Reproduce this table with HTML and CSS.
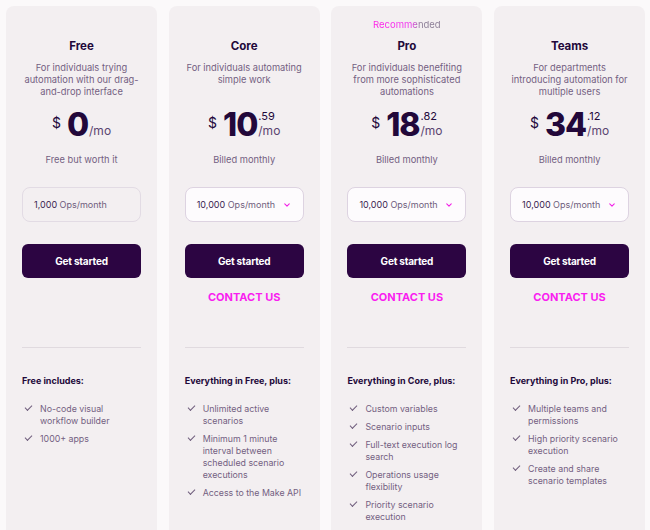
FILE: index.html
```html
<!DOCTYPE html>
<html lang="en">
<head>
<meta charset="utf-8">
<title>Pricing</title>
<link rel="stylesheet" href="styles.css">
</head>
<body>
<div class="plans">
  <section class="card">
    <div class="badge"></div>
    <h2 class="title">Free</h2>
    <p class="desc">For individuals trying automation with our drag-and-drop interface</p>
    <div class="price"><span class="cur">$</span><span class="amt">0</span><span class="side"><span class="cents">&nbsp;</span><span class="per">/mo</span></span></div>
    <p class="billing">Free but worth it</p>
    <div class="ops ops-disabled"><span><b>1,000</b> Ops/month</span></div>
    <button class="cta">Get started</button>
    <a class="contact hidden">CONTACT US</a>
    <hr class="sep">
    <h3 class="inc">Free includes:</h3>
    <ul class="features">
      <li>No-code visual workflow builder</li>
      <li>1000+ apps</li>
    </ul>
  </section>

  <section class="card">
    <div class="badge"></div>
    <h2 class="title">Core</h2>
    <p class="desc">For individuals automating simple work</p>
    <div class="price"><span class="cur">$</span><span class="amt">10</span><span class="side"><span class="cents">.59</span><span class="per">/mo</span></span></div>
    <p class="billing">Billed monthly</p>
    <div class="ops"><span><b>10,000</b> Ops/month</span><svg class="chev" viewBox="0 0 8 5" width="6" height="4"><path d="M1 1l3 3 3-3" fill="none" stroke="currentColor" stroke-width="1.4" stroke-linecap="round" stroke-linejoin="round"/></svg></div>
    <button class="cta">Get started</button>
    <a class="contact">CONTACT US</a>
    <hr class="sep">
    <h3 class="inc">Everything in Free, plus:</h3>
    <ul class="features">
      <li>Unlimited active scenarios</li>
      <li>Minimum 1 minute interval between scheduled scenario executions</li>
      <li>Access to the Make API</li>
    </ul>
  </section>

  <section class="card">
    <div class="badge"><span class="rec">Recommended</span></div>
    <h2 class="title">Pro</h2>
    <p class="desc">For individuals benefiting from more sophisticated automations</p>
    <div class="price"><span class="cur">$</span><span class="amt">18</span><span class="side"><span class="cents">.82</span><span class="per">/mo</span></span></div>
    <p class="billing">Billed monthly</p>
    <div class="ops"><span><b>10,000</b> Ops/month</span><svg class="chev" viewBox="0 0 8 5" width="6" height="4"><path d="M1 1l3 3 3-3" fill="none" stroke="currentColor" stroke-width="1.4" stroke-linecap="round" stroke-linejoin="round"/></svg></div>
    <button class="cta">Get started</button>
    <a class="contact">CONTACT US</a>
    <hr class="sep">
    <h3 class="inc">Everything in Core, plus:</h3>
    <ul class="features">
      <li>Custom variables</li>
      <li>Scenario inputs</li>
      <li>Full-text execution log search</li>
      <li>Operations usage flexibility</li>
      <li>Priority scenario execution</li>
    </ul>
  </section>

  <section class="card">
    <div class="badge"></div>
    <h2 class="title">Teams</h2>
    <p class="desc">For departments introducing automation for multiple users</p>
    <div class="price"><span class="cur">$</span><span class="amt">34</span><span class="side"><span class="cents">.12</span><span class="per">/mo</span></span></div>
    <p class="billing">Billed monthly</p>
    <div class="ops"><span><b>10,000</b> Ops/month</span><svg class="chev" viewBox="0 0 8 5" width="6" height="4"><path d="M1 1l3 3 3-3" fill="none" stroke="currentColor" stroke-width="1.4" stroke-linecap="round" stroke-linejoin="round"/></svg></div>
    <button class="cta">Get started</button>
    <a class="contact">CONTACT US</a>
    <hr class="sep">
    <h3 class="inc">Everything in Pro, plus:</h3>
    <ul class="features">
      <li>Multiple teams and permissions</li>
      <li>High priority scenario execution</li>
      <li>Create and share scenario templates</li>
    </ul>
  </section>
</div>
</body>
</html>
```

FILE: styles.css
```css
* { box-sizing: border-box; }

html, body {
  margin: 0;
  padding: 0;
  background: #fbf9fa;
  font-family: Inter, "Noto Sans", sans-serif;
  color: #6f5d7c;
  height: 530px;
  overflow: hidden;
}

.plans {
  display: grid;
  grid-template-columns: repeat(4, 151px);
  column-gap: 11.7px;
  padding: 6px 6px 0 6px;
}

.card {
  background: #f3eff1;
  border-radius: 8px;
  padding: 13px 16px 0 16px;
  height: 540px;
  display: flex;
  flex-direction: column;
  align-items: stretch;
  text-align: center;
}

.badge {
  height: 12px;
  line-height: 12px;
  font-size: 9.5px;
}

.rec {
  background: linear-gradient(90deg, #ff1fe6 0%, #f034f0 55%, #8a7c95 70%, #8a7c95 100%);
  -webkit-background-clip: text;
  background-clip: text;
  color: transparent;
}

.title {
  margin: 7px 0 0;
  font-size: 11.5px;
  line-height: 16px;
  font-weight: 700;
  color: #22083a;
}

.desc {
  margin: 8px 0 0;
  font-size: 9.3px;
  line-height: 12px;
  min-height: 36px;
  color: #745f82;
}

.price {
  margin-top: 9px;
  display: flex;
  justify-content: center;
  align-items: center;
  color: #22083a;
  height: 36px;
}

.cur {
  font-size: 14px;
  line-height: 16px;
  margin-right: 6px;
  margin-bottom: 5px;
}

.amt {
  font-size: 32px;
  line-height: 36px;
  font-weight: 800;
  letter-spacing: -1px;
}

.side {
  display: flex;
  flex-direction: column;
  align-items: flex-start;
  margin-left: 1px;
  margin-bottom: 3px;
}

.cents {
  font-size: 11px;
  line-height: 14px;
}

.per {
  font-size: 12px;
  line-height: 15px;
  color: #5a4470;
}

.billing {
  margin: 11px 0 0;
  font-size: 9.3px;
  line-height: 12px;
  color: #745f82;
}

.ops {
  margin-top: 21px;
  height: 35px;
  border: 1px solid #ddd3e1;
  border-radius: 8px;
  background: #fdfbfd;
  display: flex;
  align-items: center;
  justify-content: space-between;
  padding: 0 13px 0 11px;
  font-size: 9px;
  color: #6f5d7c;
}

.ops b {
  font-weight: 400;
  color: #3b2450;
}

.ops-disabled {
  background: #f3eff1;
  border-color: #e2dbe4;
}

.chev {
  color: #f21ee6;
}

.cta {
  margin-top: 22px;
  height: 34px;
  border: 0;
  border-radius: 6px;
  background: #2c0542;
  color: #ffffff;
  font-family: inherit;
  font-size: 10px;
  font-weight: 700;
  letter-spacing: -0.2px;
}

.contact {
  margin-top: 12px;
  font-size: 11px;
  line-height: 14px;
  font-weight: 700;
  color: #f91ef0;
}

.hidden { visibility: hidden; }

.sep {
  margin: 43px 0 0;
  border: 0;
  border-top: 1px solid #e0dadf;
  height: 0;
}

.inc {
  margin: 27px 0 0;
  text-align: left;
  font-size: 9px;
  line-height: 12px;
  font-weight: 700;
  color: #22083a;
}

.features {
  list-style: none;
  margin: 16px 0 0;
  padding: 0;
  text-align: left;
  display: flex;
  flex-direction: column;
  gap: 6px;
}

.features li {
  position: relative;
  padding-left: 18px;
  font-size: 8.8px;
  line-height: 12px;
  color: #745f82;
}

.features li::before {
  content: "";
  position: absolute;
  left: 3px;
  top: 2px;
  width: 6px;
  height: 3px;
  border-left: 1.3px solid #6f5d7c;
  border-bottom: 1.3px solid #6f5d7c;
  transform: rotate(-45deg);
}
```
